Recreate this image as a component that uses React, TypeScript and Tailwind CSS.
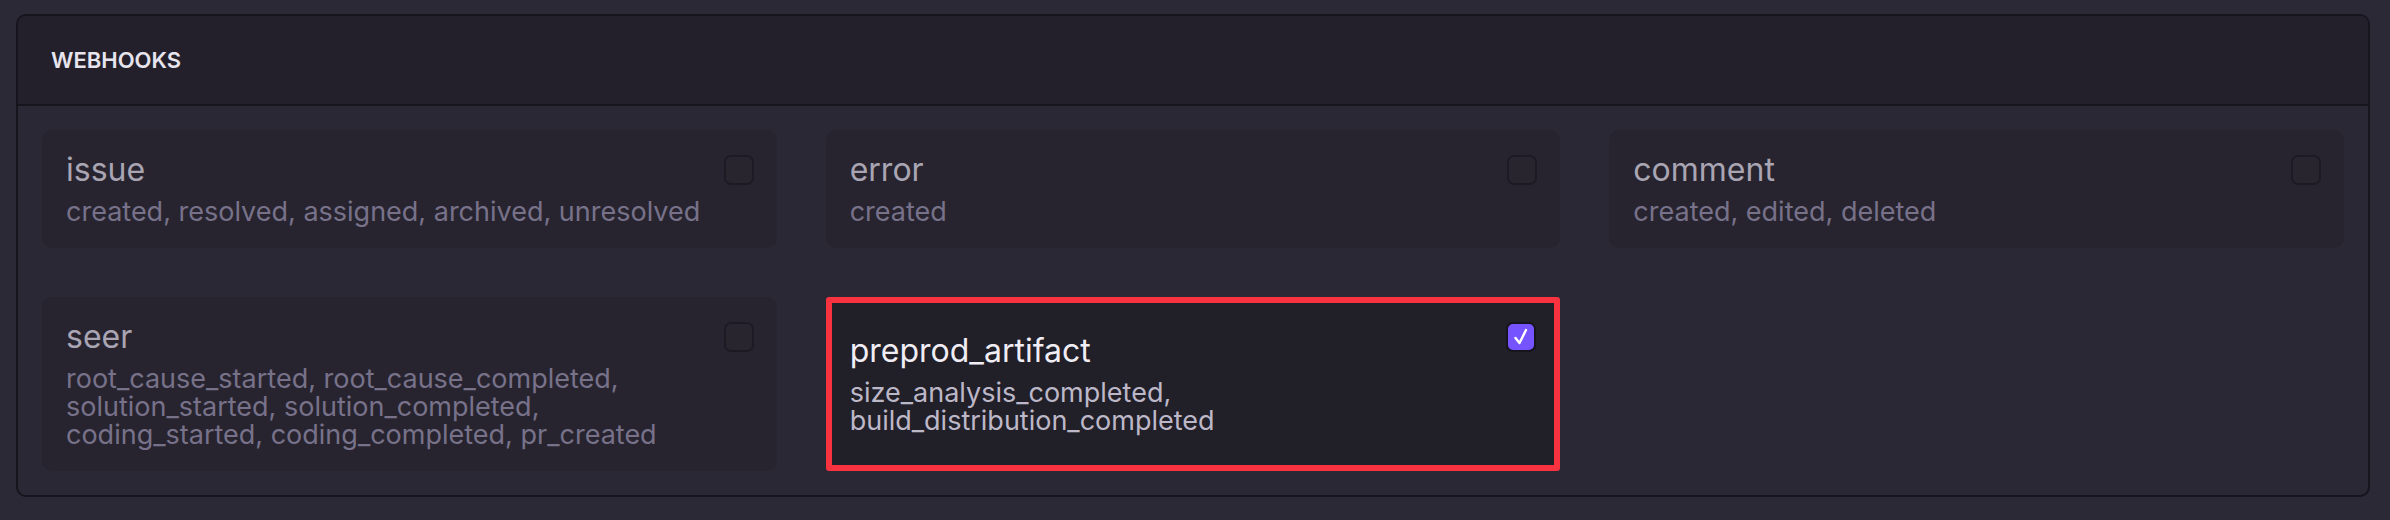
import React from 'react';

interface Hook {
    name: string;
    events: string;
    checked: boolean;
}

const hooks: Hook[] = [
    { name: 'issue', events: 'created, resolved, assigned, archived, unresolved', checked: false },
    { name: 'error', events: 'created', checked: false },
    { name: 'comment', events: 'created, edited, deleted', checked: false },
    {
        name: 'seer',
        events: 'root_cause_started, root_cause_completed, solution_started, solution_completed, coding_started, coding_completed, pr_created',
        checked: false,
    },
    { name: 'preprod_artifact', events: 'size_analysis_completed, build_distribution_completed', checked: true },
];

const Checkbox: React.FC<{ checked: boolean }> = ({ checked }) =>
    checked ? (
        <div className="absolute top-[19px] right-[18px] w-[30px] h-[30px] rounded-[7px] border-2 border-[#16141c] bg-[#7553ff] flex items-center justify-center">
            <svg width="18" height="20" viewBox="0 0 18 20" fill="none">
                <path d="M3.5 11 L7.5 16 L14 3" stroke="white" strokeWidth="2.4" strokeLinecap="round" strokeLinejoin="round" />
            </svg>
        </div>
    ) : (
        <div className="absolute top-[25px] right-[23px] w-[30px] h-[30px] rounded-[7px] border-2 border-[#1d1a24] bg-[#28252f]" />
    );

const HookCard: React.FC<{ hook: Hook }> = ({ hook }) => {
    if (hook.checked) {
        return (
            <div className="relative flex flex-col justify-center border-[6px] border-[#f8323f] rounded-[3px] bg-[#211f28] pl-[18px] pr-[54px] py-[16px]">
                <Checkbox checked />
                <div className="text-[32px] leading-[36px] text-[#f0edf5]">{hook.name}</div>
                <div className="mt-[10px] text-[27px] leading-[28px] text-[#bdb8c8]">{hook.events}</div>
            </div>
        );
    }
    return (
        <div className="relative flex flex-col justify-center rounded-[10px] bg-[#27242f] pl-[24px] pr-[60px] py-[22px]">
            <Checkbox checked={false} />
            <div className="text-[32px] leading-[36px] text-[#a9a5b3]">{hook.name}</div>
            <div className="mt-[10px] text-[27px] leading-[28px] text-[#77728a]">{hook.events}</div>
        </div>
    );
};

const App: React.FC = () => {
    return (
        <div
            className="w-[2390px] h-[520px] bg-[#2c2937] pl-[16px] pr-[20px] pt-[14px]"
            style={{ fontFamily: 'Inter, "Noto Sans", sans-serif' }}
        >
            <div className="rounded-[10px] border-2 border-[#16141c] bg-[#2b2836] overflow-hidden">
                <div className="h-[90px] bg-[#23202b] border-b-2 border-[#16141c] px-[33px] flex items-center">
                    <span className="text-[22px] font-semibold uppercase text-[#e7e4ee]">Webhooks</span>
                </div>
                <div className="p-[24px] grid grid-cols-3 gap-[49px]">
                    {hooks.map((hook) => (
                        <HookCard key={hook.name} hook={hook} />
                    ))}
                </div>
            </div>
        </div>
    );
};

export default App;
